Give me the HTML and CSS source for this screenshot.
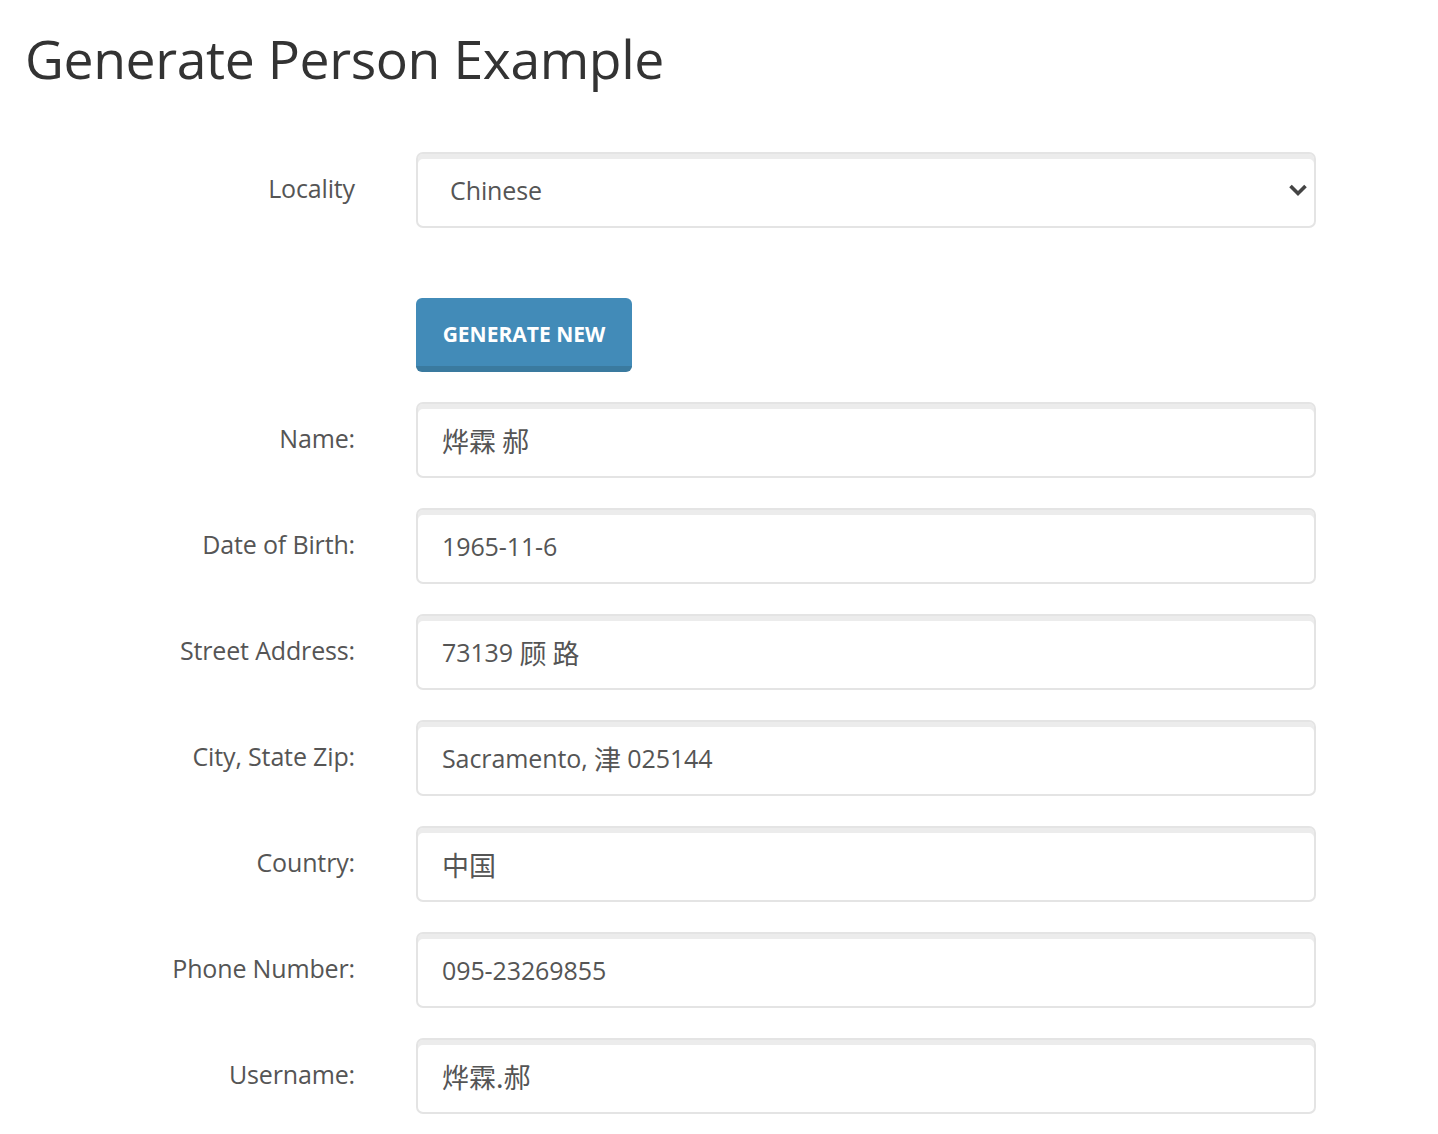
FILE: index.html
```html
<!DOCTYPE html>
<html lang="en">
<head>
<meta charset="utf-8">
<title>Generate Person Example</title>
<link rel="stylesheet" href="styles.css">
</head>
<body>
<div class="page">
  <h1 class="title">Generate Person Example</h1>
  <form class="form">
    <div class="row row-locality">
      <label class="label">Locality</label>
      <div class="select">
        <span class="select-text">Chinese</span>
        <svg class="chev" width="20" height="14" viewBox="0 0 20 14"><path d="M2.5 3 L10 10.5 L17.5 3" fill="none" stroke="#444" stroke-width="3.6" stroke-linecap="butt" stroke-linejoin="miter"/></svg>
      </div>
    </div>
    <div class="row row-button">
      <span class="label"></span>
      <div><button type="button" class="btn">GENERATE NEW</button></div>
    </div>
    <div class="row"><label class="label">Name:</label><div class="field"><span class="cjk">烨霖 郝</span></div></div>
    <div class="row"><label class="label">Date of Birth:</label><div class="field">1965-11-6</div></div>
    <div class="row"><label class="label">Street Address:</label><div class="field">73139&nbsp;<span class="cjk">顾 路</span></div></div>
    <div class="row"><label class="label">City, State Zip:</label><div class="field">Sacramento,&nbsp;<span class="cjk">津</span>&nbsp;025144</div></div>
    <div class="row"><label class="label">Country:</label><div class="field"><span class="cjk">中国</span></div></div>
    <div class="row"><label class="label">Phone Number:</label><div class="field">095-23269855</div></div>
    <div class="row"><label class="label">Username:</label><div class="field"><span class="cjk">烨霖.郝</span></div></div>
  </form>
</div>
</body>
</html>
```
FILE: styles.css
```css
html, body {
  margin: 0;
  padding: 0;
  background: #ffffff;
}
body {
  font-family: "Open Sans", "Noto Sans CJK SC", sans-serif;
  color: #555555;
}
.page {
  padding: 0 26px;
}
.title {
  margin: 0 0 0 -1px;
  padding-top: 23px;
  height: 152px;
  box-sizing: border-box;
  font-size: 53.5px;
  font-weight: 400;
  color: #333333;
  line-height: 72px;
  letter-spacing: -0.4px;
}
.form {
  display: flex;
  flex-direction: column;
  gap: 30px;
}
.row {
  display: grid;
  grid-template-columns: 329px 900px;
  column-gap: 61px;
  align-items: center;
}
.row-locality {
  margin-bottom: 40px;
}
.label {
  text-align: right;
  font-size: 25px;
  color: #555555;
  letter-spacing: -0.15px;
  padding-bottom: 4px;
}
.field, .select {
  height: 76px;
  box-sizing: border-box;
  border: 2px solid #e4e4e4;
  border-radius: 7px;
  box-shadow: inset 0 5px 0 #ececec;
  display: flex;
  align-items: center;
  padding: 0 24px;
  font-size: 25px;
  color: #555555;
  letter-spacing: -0.1px;
  white-space: pre;
}
.cjk {
  font-family: "Noto Sans CJK SC", sans-serif;
  font-size: 27px;
  letter-spacing: 0;
}
.select {
  justify-content: space-between;
  padding-left: 32px;
  padding-right: 6px;
}
.chev {
  display: block;
}
.btn {
  width: 216px;
  height: 74px;
  box-sizing: border-box;
  background: #428bb8;
  border: none;
  border-bottom: 6px solid #3a7a9f;
  border-radius: 6px;
  color: #ffffff;
  font-family: "Open Sans", sans-serif;
  font-weight: 700;
  font-size: 21px;
  letter-spacing: 0;
  padding: 4px 0 0;
}
```
